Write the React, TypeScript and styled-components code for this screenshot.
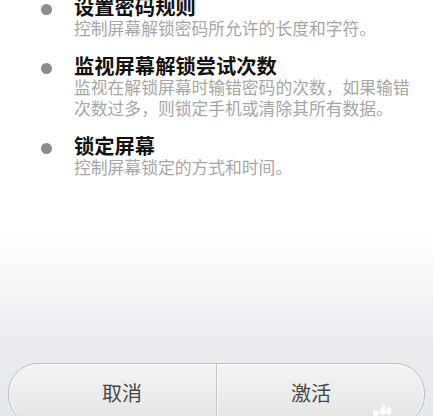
import React from "react";
import styled, { createGlobalStyle } from "styled-components";

const Global = createGlobalStyle`
  html, body { margin: 0; padding: 0; }
  body {
    width: 433px;
    height: 416px;
    overflow: hidden;
    font-family: "Noto Sans CJK SC", "Noto Sans", sans-serif;
  }
`;

const Page = styled.div`
  position: relative;
  width: 433px;
  height: 416px;
  overflow: hidden;
  display: flex;
  flex-direction: column;
  background: linear-gradient(
    to bottom,
    #ffffff 0px,
    #ffffff 232px,
    #f5f5f6 290px,
    #ebebed 345px,
    #e7e8ea 416px
  );
`;

const List = styled.div`
  display: flex;
  flex-direction: column;
  gap: 14px;
  margin-top: -6px;
`;

const Item = styled.div`
  display: flex;
  align-items: flex-start;
`;

const Bullet = styled.span`
  flex: none;
  width: 11px;
  height: 11px;
  border-radius: 50%;
  background: #8c8c8c;
  margin: 10px 22px 0 41px;
`;

const Texts = styled.div`
  width: 342px;
  display: flex;
  flex-direction: column;
`;

const Title = styled.div`
  font-size: 20.3px;
  line-height: 24px;
  font-weight: 700;
  color: #121212;
  white-space: nowrap;
`;

const Sub = styled.div`
  font-size: 16.8px;
  line-height: 21px;
  color: #a6a6a6;
`;

const Spacer = styled.div`
  flex: 1;
`;

const Footer = styled.div`
  flex: none;
  height: 53px;
  padding: 0 8px;
  overflow: hidden;
`;

const ButtonBar = styled.div`
  height: 60px;
  display: flex;
  border: 1px solid #bdbdbf;
  border-radius: 30px;
  background: linear-gradient(to bottom, #f4f4f5 0%, #ebebec 60%, #e2e2e3 100%);
  box-shadow: inset 0 1px 0 #ffffff, inset 1px 0 0 #fafafa, inset -1px 0 0 #fafafa;
  overflow: hidden;
`;

const Btn = styled.button<{ $side: "left" | "right" }>`
  flex: 1;
  border: none;
  background: transparent;
  margin: 0;
  font-family: "Noto Sans CJK SC", "Noto Sans", sans-serif;
  font-size: 20px;
  line-height: 24px;
  color: #474747;
  display: flex;
  justify-content: center;
  align-items: flex-start;
  padding: 17px 0 0 0;
  ${(p) => (p.$side === "left" ? "padding-left: 19px;" : "padding-right: 19px;")}
  ${(p) =>
    p.$side === "left"
      ? "border-right: 1px solid #c4c4c6;"
      : "box-shadow: inset 1px 0 0 #ffffff;"}
`;

const Watermark = styled.svg`
  position: absolute;
  left: 370px;
  top: 404px;
  width: 30px;
  height: 12px;
`;

const items = [
  {
    title: "设置密码规则",
    sub: "控制屏幕解锁密码所允许的长度和字符。",
  },
  {
    title: "监视屏幕解锁尝试次数",
    sub: "监视在解锁屏幕时输错密码的次数，如果输错次数过多，则锁定手机或清除其所有数据。",
  },
  {
    title: "锁定屏幕",
    sub: "控制屏幕锁定的方式和时间。",
  },
];

export default function App() {
  return (
    <>
      <Global />
      <Page>
        <List>
          {items.map((it) => (
            <Item key={it.title}>
              <Bullet />
              <Texts>
                <Title>{it.title}</Title>
                <Sub>{it.sub}</Sub>
              </Texts>
            </Item>
          ))}
        </List>
        <Spacer />
        <Footer>
          <ButtonBar>
            <Btn $side="left">取消</Btn>
            <Btn $side="right">激活</Btn>
          </ButtonBar>
        </Footer>
        <Watermark viewBox="0 0 30 12">
          <ellipse cx="6" cy="9" rx="3" ry="3" fill="#ffffff" opacity="0.9" />
          <ellipse cx="13" cy="7" rx="3" ry="4" fill="#ffffff" opacity="0.9" />
          <ellipse cx="19" cy="7" rx="2.5" ry="4" fill="#ffffff" opacity="0.9" />
          <ellipse cx="14" cy="2" rx="2" ry="1.5" fill="#ffffff" opacity="0.7" />
        </Watermark>
      </Page>
    </>
  );
}
